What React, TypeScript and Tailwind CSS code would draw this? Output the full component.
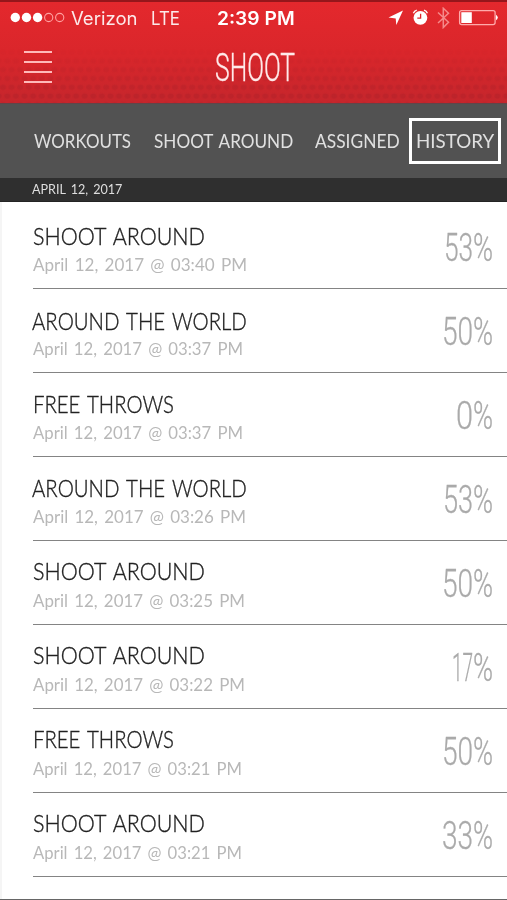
import { useLayoutEffect, useRef, useState } from "react";

type FitProps = { text: string; width: number; className?: string };

/** Real text stretched horizontally so that its advance equals `width`. */
function Fit({ text, width, className = "" }: FitProps) {
  const ref = useRef<HTMLSpanElement>(null);
  const [scale, setScale] = useState(1);
  useLayoutEffect(() => {
    if (ref.current) setScale(width / ref.current.offsetWidth);
  }, [text, width]);
  return (
    <span className={`block whitespace-nowrap ${className}`} style={{ width }}>
      <span ref={ref} className="inline-block origin-left" style={{ transform: `scaleX(${scale})` }}>
        {text}
      </span>
    </span>
  );
}

const rows = [
  { title: "SHOOT AROUND", w: 172, time: "03:40", dw: 214, num: "53", pw: 29, pad: "pt-[19px]" },
  { title: "AROUND THE WORLD", w: 215, time: "03:37", dw: 210, num: "50", pw: 31, pad: "pt-[20px]" },
  { title: "FREE THROWS", w: 141, time: "03:37", dw: 210, num: "0", pw: 17, pad: "pt-[19px]" },
  { title: "AROUND THE WORLD", w: 215, time: "03:26", dw: 213, num: "53", pw: 30, pad: "pt-[19px]" },
  { title: "SHOOT AROUND", w: 172, time: "03:25", dw: 212, num: "50", pw: 31, pad: "pt-[18px]" },
  { title: "SHOOT AROUND", w: 172, time: "03:22", dw: 212, num: "17", pw: 21, pad: "pt-[18px]" },
  { title: "FREE THROWS", w: 141, time: "03:21", dw: 209, num: "50", pw: 31, pad: "pt-[18px]" },
  { title: "SHOOT AROUND", w: 172, time: "03:21", dw: 209, num: "33", pw: 31, pad: "pt-[18px]" },
];

function StatusBar() {
  return (
    <div className="flex h-[35px] items-center font-['Inter',sans-serif] text-[18px] leading-[35px] text-white/90">
      <svg className="ml-[10px] h-[11px] w-[56px]" viewBox="0 0 56 11">
        <g fill="#fff">
          <circle cx="5.3" cy="5.5" r="4.7" />
          <circle cx="16.5" cy="5.5" r="4.7" />
          <circle cx="27.6" cy="5.5" r="4.7" />
        </g>
        <g fill="none" stroke="#ffa0a0" strokeWidth="1.1">
          <circle cx="38.7" cy="5.5" r="4.1" />
          <circle cx="49.7" cy="5.5" r="4.1" />
        </g>
      </svg>
      <Fit text="Verizon" width={67} className="ml-[5px] pt-px" />
      <Fit text="LTE" width={29} className="ml-[13px] pt-px" />
      <Fit text="2:39 PM" width={78} className="ml-[37px] pt-px font-semibold text-white" />
      <svg className="ml-[92px] h-[22px] w-[112px]" viewBox="387 7 112 22">
        <path d="M403 10.5 388.5 17.4l7.2 1 .6 6.6z" fill="#fff" />
        <circle cx="420.4" cy="17.8" r="6.9" fill="#fff" />
        <path d="M413.4 13.2q.8-2.6 3.4-3.1M427.4 13.2q-.8-2.6-3.4-3.1" fill="none" stroke="#fff" strokeWidth="1.3" />
        <path d="M420.6 13.7v4.4h-3.3" fill="none" stroke="#dc262b" strokeWidth="1.3" />
        <path d="m438 12.5 10.5 9.8-5.2 5.2V8.3l5.2 4.9L438 23" fill="none" stroke="#f58a8a" strokeWidth="1.5" />
        <rect x="459.6" y="10.6" width="35.5" height="14" rx="2" fill="none" stroke="#ffaaaa" strokeWidth="1.3" />
        <path d="M461.3 12.2h10.5v10.8h-10.5z" fill="#fff" />
        <path d="M496 14.7q3.6 2.8 0 5.6z" fill="#fff" />
      </svg>
    </div>
  );
}

function Header() {
  return (
    <header className="relative h-[103px] shrink-0 overflow-hidden border-t-2 border-[#96161b] bg-linear-to-b from-[#e4282d] via-[#da262b] to-[#c5262c]">
      <svg className="absolute inset-x-0 bottom-0 h-[56px] w-full">
        <defs>
          <pattern id="dots" width="8.6" height="17.6" patternUnits="userSpaceOnUse">
            <ellipse cx="3" cy="5" rx="3" ry="2.5" fill="#aa2029" />
            <ellipse cx="7.3" cy="13.8" rx="3" ry="2.5" fill="#aa2029" />
            <ellipse cx="-1.3" cy="13.8" rx="3" ry="2.5" fill="#aa2029" />
          </pattern>
          <linearGradient id="fade" x1="0" y1="0" x2="0" y2="1">
            <stop offset="0" stopColor="#000" />
            <stop offset="1" stopColor="#6a6a6a" />
          </linearGradient>
          <mask id="fadeMask">
            <rect width="507" height="56" fill="url(#fade)" />
          </mask>
        </defs>
        <rect width="507" height="56" fill="url(#dots)" mask="url(#fadeMask)" />
      </svg>
      <div className="relative -mt-[2px]">
        <StatusBar />
        <div className="flex items-start">
          <div className="mt-[16px] ml-[24px] flex w-7 flex-col gap-[8px]">
            <i className="h-[2px] bg-[#ffb9b9]" />
            <i className="h-[2px] bg-[#ffb9b9]" />
            <i className="h-[2px] bg-[#ffb9b9]" />
            <i className="h-[2px] bg-[#ffb9b9]" />
          </div>
          <Fit
            text="SHOOT"
            width={80}
            className="mt-[13px] ml-[163px] font-['Roboto',sans-serif] text-[38px] leading-[40px] font-light text-[#ffeaea] [-webkit-text-stroke:0.3px_#ffeaea]"
          />
        </div>
      </div>
    </header>
  );
}

export default function App() {
  return (
    <div className="flex h-[900px] w-[507px] flex-col overflow-hidden border-b border-[#666] bg-white font-['Lato',sans-serif]">
      <Header />
      <nav className="flex h-[75px] shrink-0 items-center border-t border-[#624448] bg-[#525252] pl-[34px] text-[19px] text-[#e0e0e0]">
        <Fit text="WORKOUTS" width={97} />
        <Fit text="SHOOT AROUND" width={139} className="ml-[23px] [word-spacing:2px]" />
        <Fit text="ASSIGNED" width={85} className="ml-[22px]" />
        <div className="ml-[9px] flex h-[46px] w-[92px] items-center border-3 border-white pl-[4px]">
          <Fit text="HISTORY" width={78} />
        </div>
      </nav>
      <div className="flex h-[24px] shrink-0 items-center border-b border-[#242424] bg-[#2f2f2f] pb-[2px] pl-[32px] text-[14px] text-[#dedede]">
        <Fit text="APRIL 12, 2017" width={90} className="[word-spacing:2px]" />
      </div>
      <main className="grow overflow-hidden border-l-2 border-[#f5f5f5] pt-[3px] pl-[31px]">
        {rows.map((r, i) => (
          <div key={i} className="flex h-[84px] justify-between border-b border-[#848484]">
            <div className={`relative ${r.pad}`}>
              <Fit
                text={r.title}
                width={r.w}
                className={`h-[24px] text-[23.5px] leading-[24px] font-light text-[#222] [-webkit-text-stroke:0.35px_#222] [word-spacing:2px] ${r.title.startsWith("A") ? "-ml-px" : ""}`}
              />
              <Fit
                text={`April 12, 2017 @ ${r.time} PM`}
                width={r.dw}
                className="absolute bottom-[13px] left-0 text-[18px] leading-[22px] text-[#b8b8b8] [word-spacing:2px]"
              />
            </div>
            <div className="mt-[23px] mr-[14px] flex font-['Roboto',sans-serif] text-[38px] leading-[40px] font-light text-[#aaa] [-webkit-text-stroke:0.3px_#aaa]">
              <Fit text={r.num} width={r.pw} />
              <Fit text="%" width={20} />
            </div>
          </div>
        ))}
      </main>
    </div>
  );
}
